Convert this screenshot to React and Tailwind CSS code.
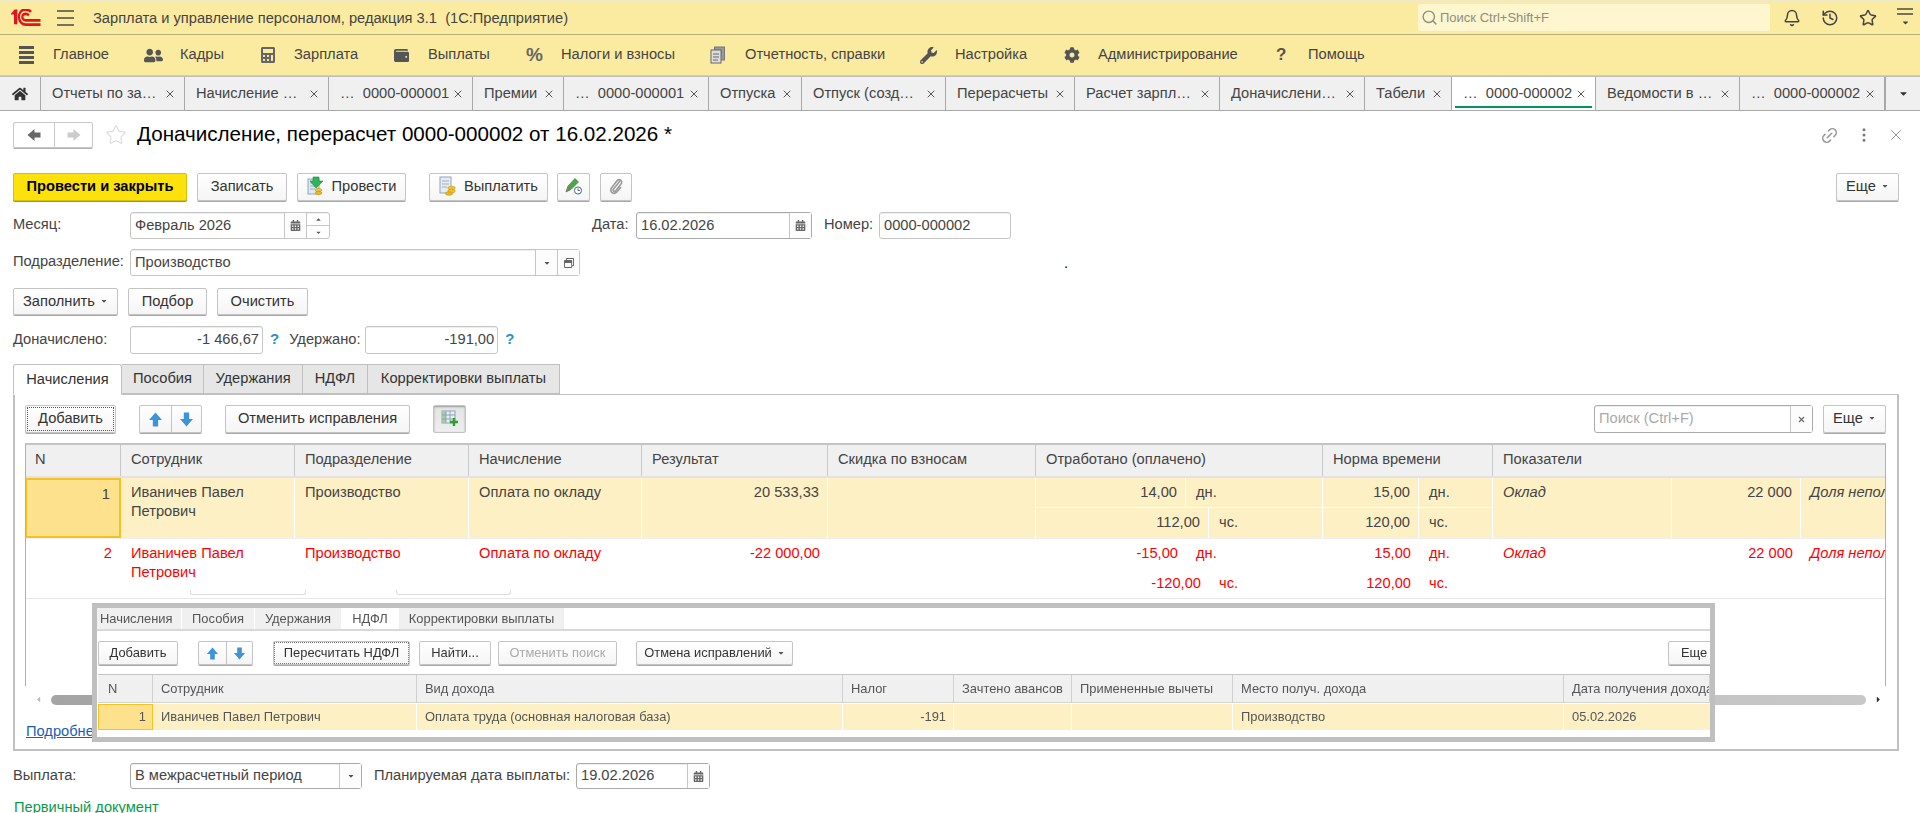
import React from "react";
import { Bell, History, Star, X, Link2, MoreVertical, Search } from "lucide-react";
import { FaHome, FaUserFriends, FaCalculator, FaWallet, FaWrench, FaCog, FaCalendarAlt, FaCaretDown, FaCaretUp, FaCaretLeft, FaCaretRight, FaRegWindowRestore } from "react-icons/fa";

const Logo = () => (
  <svg width="31" height="17" viewBox="0 1 31 14" preserveAspectRatio="none" className="shrink-0">
    <path d="M1 5 L4.5 1.5 H7.4 V13.5 H4 V5.5 H1 Z" fill="#e0141c" />
    <path d="M21 3.5 C20 2 18 1.5 15.5 1.5 C11.5 1.5 9 4 9 7.5 C9 11 11.5 13.8 15.5 13.8 H30.5 M19 6.2 C18 5.3 17 5 15.7 5 C13.7 5 12.3 6 12.3 7.5 C12.3 9 13.7 10.3 15.7 10.3 H30.5" fill="none" stroke="#e0141c" strokeWidth="2.2" />
  </svg>
);
const Burger = ({ thick = false }) => (
  <div className={thick ? "flex flex-col gap-[2px] w-[15px] shrink-0" : "flex flex-col gap-[5px] w-[17px] shrink-0"}>
    {(thick ? [0, 1, 2, 3] : [0, 1, 2]).map((i) => (
      <div key={i} className={thick ? "h-[3px] bg-[#555]" : "h-[2px] bg-[#77735a]"} />
    ))}
  </div>
);
const Arrow = ({ size = 15, color, rotate = "" }) => (
  <svg width={size} height={size} viewBox="0 0 14 14" className={rotate}>
    <path d="M7 .5 L13 7.5 H9.5 V13.5 H4.5 V7.5 H1 Z" fill={color} />
  </svg>
);
const ProvIcon = () => (
  <svg width="18" height="20" viewBox="0 0 18 20" className="shrink-0">
    <rect x="1" y="3" width="11" height="15" fill="#dfe8f2" stroke="#93a5b8" />
    <path d="M3 7h7M3 10h7M3 13h5" stroke="#9fb0c0" />
    <path d="M6 1h6V5h4l-7 7-6-7h3z" fill="#2fb457" stroke="#1d8a40" strokeWidth=".6" />
    <ellipse cx="11.5" cy="14" rx="3.5" ry="1.6" fill="#f1c232" stroke="#b98f12" strokeWidth=".5" />
    <ellipse cx="11.5" cy="17" rx="3.5" ry="1.6" fill="#e9b71f" stroke="#b98f12" strokeWidth=".5" />
  </svg>
);
const PayIcon = () => (
  <svg width="18" height="20" viewBox="0 0 18 20" className="shrink-0">
    <rect x="1" y="1" width="11" height="16" fill="#e6ecf3" stroke="#93a5b8" />
    <path d="M3 5h7M3 8h7M3 11h5" stroke="#9fb0c0" />
    <ellipse cx="12.5" cy="12" rx="3.8" ry="1.8" fill="#f1c232" stroke="#b98f12" strokeWidth=".5" />
    <ellipse cx="12.5" cy="15" rx="3.8" ry="1.8" fill="#f1c232" stroke="#b98f12" strokeWidth=".5" />
    <ellipse cx="10" cy="17.5" rx="3.8" ry="1.8" fill="#e9b71f" stroke="#b98f12" strokeWidth=".5" />
  </svg>
);
const PenIcon = () => (
  <svg width="18" height="18" viewBox="0 0 18 18">
    <path d="M1 15 L3 9 L10 1.5 L13.5 5 L6 12.5 Z" fill="#4ea64a" stroke="#35763a" strokeWidth=".6" />
    <path d="M1 15 L3 9 L6 12.5 Z" fill="#8a7a60" />
    <circle cx="13" cy="13.5" r="3.6" fill="#fff" stroke="#4a6b8a" />
    <path d="M13 11.5v2h1.8" stroke="#4a6b8a" fill="none" />
  </svg>
);
const ClipIcon = () => (
  <svg width="14" height="18" viewBox="0 0 14 18">
    <path d="M11 4 L4.5 12 C3.3 13.6 5.3 15.3 6.7 13.8 L12 7 C14 4.3 10.8 1 8.3 3.6 L2.6 10.8 C0 14.4 4.6 18.4 7.8 15 L12 10" fill="none" stroke="#9a9a9a" strokeWidth="1.6" />
  </svg>
);
const TableAddIcon = () => (
  <svg width="18" height="18" viewBox="0 0 18 18">
    <rect x="1" y="2" width="13" height="12" fill="#e8eef5" stroke="#8fa4b8" />
    <rect x="1" y="2" width="4" height="12" fill="#a9c8a4" />
    <path d="M5 2v12M9 2v12M1 6h13M1 10h13" stroke="#8fa4b8" />
    <path d="M13 9v8M9 13h8" stroke="#2ca02c" strokeWidth="2.4" />
  </svg>
);

const cellBtn = "flex items-center justify-center gap-[7px] border border-[#c4c4c4] rounded-[2px] bg-linear-to-b from-white to-[#f5f5f5] shadow-[0_1px_0_#a8a8a8] text-[#333] shrink-0";
const Btn = ({ w, h = "h-[28px]", children, extra = "" }) => <div className={`${cellBtn} ${w} ${h} ${h === "h-[24px]" ? "" : "pb-[2px]"} ${extra}`}>{children}</div>;
const Caret = () => <FaCaretDown className="text-[#555] ml-[-2px]" size={8} />;
const Cal = () => <FaCalendarAlt className="text-[#666]" size={11} />;
const fieldBase = "flex h-full border border-[#c6c6c6] rounded-[3px] bg-white shrink-0 text-[#444] shadow-[inset_0_1px_0_#eee]";
const fieldCls = `${fieldBase} items-stretch`;
const fieldText = "flex-1 pl-[4px] pb-[2px] flex items-center";
const Addon = ({ w = "w-[22px]", children }) => <div className={`${w} flex items-center justify-center border-l border-[#c6c6c6] bg-[#fcfcfc] shrink-0`}>{children}</div>;
const Label = ({ w, children, extra = "" }) => <div className={`text-[#444] shrink-0 flex items-center pb-[3px] ${w} ${extra}`}>{children}</div>;
const Q = ({ extra = "" }) => <div className={`font-bold text-[15px] text-[#2f8fcf] pb-[2px] shrink-0 ${extra}`}>?</div>;

const navItems = [
  { t: "Главное", icon: <Burger thick />, box: "w-[34px] pl-0", w: "w-[125px]" },
  { t: "Кадры", icon: <FaUserFriends size={19} color="#555" />, w: "w-[116px]", box: "w-[36px]" },
  { t: "Зарплата", icon: <FaCalculator size={16} color="#666" />, w: "w-[134px]", box: "w-[34px]" },
  { t: "Выплаты", icon: <FaWallet size={15} color="#555" />, w: "w-[132px]", box: "w-[34px]" },
  { t: "Налоги и взносы", icon: <span className="font-bold text-[#666] text-[19px]">%</span>, w: "w-[184px]", box: "w-[35px]" },
  { t: "Отчетность, справки", icon: <svg width="16" height="18" viewBox="0 0 16 18"><rect x="4.5" y="1" width="10" height="13" fill="#999" stroke="#777" /><rect x="1" y="4" width="10" height="13" fill="#ddd" stroke="#666" /><path d="M3 8h6M3 11h6M3 14h5" stroke="#666" /></svg>, w: "w-[210px]", box: "w-[35px]" },
  { t: "Настройка", icon: <FaWrench size={17} color="#555" />, w: "w-[144px]", box: "w-[35px]" },
  { t: "Администрирование", icon: <FaCog size={16} color="#555" />, w: "w-[210px]", box: "w-[34px]" },
  { t: "Помощь", icon: <span className="font-bold text-[#555] text-[17px]">?</span>, w: "w-[94px]", box: "w-[34px] pl-[2px]" },
];
const tabs = [
  ["Отчеты по за…", "w-[144px]"], ["Начисление …", "w-[144px]"], ["…  0000-000001", "w-[144px]"], ["Премии", "w-[91px]"],
  ["…  0000-000001", "w-[145px]"], ["Отпуска", "w-[93px]"], ["Отпуск (созд…", "w-[144px]"], ["Перерасчеты", "w-[129px]"],
  ["Расчет зарпл…", "w-[145px]"], ["Доначислени…", "w-[145px]"], ["Табели", "w-[87px]"], ["…  0000-000002", "w-[144px]", true],
  ["Ведомости в …", "w-[144px]"], ["…  0000-000002", "w-[145px]"],
];

const headCols = [
  ["N", "w-[96px]"], ["Сотрудник", "w-[174px]"], ["Подразделение", "w-[174px]"], ["Начисление", "w-[173px]"],
  ["Результат", "w-[186px]"], ["Скидка по взносам", "w-[208px]"], ["Отработано (оплачено)", "w-[287px]"],
  ["Норма времени", "w-[170px]"], ["Показатели", "flex-1"],
];
const Cell = ({ w, sep, children, extra = "" }) => <div className={`${w} shrink-0 h-full px-[10px] pt-[5px] ${sep ? "border-r border-white" : ""} ${extra}`}>{children}</div>;
const SubRow = ({ n, u, numW, sep, top }) => (
  <div className={`flex h-[30px] items-center ${top && sep ? "border-b border-white" : ""}`}>
    <div className={`${numW} shrink-0 text-right pr-[8px] ${top && sep ? "pb-[1px]" : "pb-[2px]"} h-full flex items-center justify-end ${sep ? "border-r border-white" : ""}`}>{n}</div>
    <div className={`pl-[10px] ${top && sep ? "pb-[1px]" : "pb-[2px]"}`}>{u}</div>
  </div>
);
const Row = ({ color, sel, vals, sep }) => (
  <div className={`flex h-[60px] ${color} leading-[19px]`}>
    <div className={`w-[96px] shrink-0 text-right pr-[9px] pt-[5px] ${sel ? "bg-[#fde18c] border-2 border-[#f5c226] pr-[7px] pt-[3px]" : ""}`}>{vals.n}</div>
    <Cell w="w-[174px]" sep={sep}>Иваничев Павел<br />Петрович</Cell>
    <Cell w="w-[174px]" sep={sep}>Производство</Cell>
    <Cell w="w-[173px]" sep={sep}>Оплата по окладу</Cell>
    <Cell w="w-[186px]" sep={sep} extra="text-right pr-[8px]">{vals.r}</Cell>
    <Cell w="w-[208px]" sep={sep} />
    <div className={`w-[287px] shrink-0 ${sep ? "border-r border-white" : ""}`}>
      <SubRow n={vals.a} u="дн." numW="w-[150px]" sep={sep} top />
      <SubRow n={vals.b} u="чс." numW="w-[173px]" sep={sep} />
    </div>
    <div className={`w-[170px] shrink-0 ${sep ? "border-r border-white" : ""}`}>
      <SubRow n={vals.c} u="дн." numW="w-[96px]" sep={sep} top />
      <SubRow n="120,00" u="чс." numW="w-[96px]" sep={sep} />
    </div>
    <Cell w="w-[179px]" sep={sep} extra="italic">Оклад</Cell>
    <Cell w="w-[129px]" sep={sep} extra="text-right pr-[8px]">22 000</Cell>
    <div className="flex-1 overflow-hidden whitespace-nowrap italic pl-[9px] pt-[5px]">Доля неполного</div>
  </div>
);

const miniTabs = [
  ["Начисления", "w-[84px] bg-[#f0f0f0] mr-[1px] justify-start pl-[3px]"], ["Пособия", "w-[72px] bg-[#f0f0f0] mr-[1px] justify-center"], ["Удержания", "w-[86px] bg-[#f0f0f0] justify-center"],
  ["НДФЛ", "w-[58px] bg-white justify-center"], ["Корректировки выплаты", "w-[165px] bg-[#f0f0f0] justify-center"],
];
const miniCols = [
  ["N", "w-[55px] pl-[10px]"], ["Сотрудник", "w-[264px] pl-[8px]"], ["Вид дохода", "w-[426px] pl-[8px]"], ["Налог", "w-[111px] pl-[8px]"], ["Зачтено авансов", "w-[118px] pl-[8px] whitespace-nowrap"],
  ["Примененные вычеты", "w-[161px] pl-[8px] whitespace-nowrap"], ["Место получ. дохода", "w-[331px] pl-[8px]"], ["Дата получения дохода", "flex-1 pl-[8px] whitespace-nowrap overflow-hidden"],
];

export default function App() {
  return (
    <div className="relative w-[1920px] h-[813px] overflow-hidden bg-white flex flex-col text-[14.67px] font-['Liberation_Sans',Arial,sans-serif] text-[#333]">
      {/* top bar */}
      <div className="h-[35px] shrink-0 flex items-center bg-[#fbeba0] border-t border-[#eee9c8] border-b border-b-[#b5ad7a] pl-[10px]">
        <Logo />
        <div className="ml-[16px]"><Burger /></div>
        <div className="ml-[19px] text-[#444] whitespace-pre">Зарплата и управление персоналом, редакция 3.1  (1С:Предприятие)</div>
        <div className="ml-auto flex items-center h-[27px] w-[352px] bg-[#fdf6cf] rounded-[2px] pl-[3px] gap-[2px] text-[13px] text-[#8e8e82]">
          <Search size={17} color="#8e8e82" />
          <span>Поиск Ctrl+Shift+F</span>
        </div>
        <div className="flex items-center w-[150px] shrink-0 pl-[13px] gap-[20px] text-[#444]">
          <Bell size={18} />
          <History size={18} />
          <Star size={18} />
          <div className="flex flex-col items-center gap-[3px] w-[16px]">
            <div className="h-[2px] w-[16px] bg-[#77735a]" />
            <div className="h-[2px] w-[16px] bg-[#77735a]" />
            <FaCaretDown size={9} color="#444" />
          </div>
        </div>
      </div>
      {/* sections */}
      <div className="h-[41px] shrink-0 flex items-center bg-[#fbeba0] border-b border-[#d8d08e] pl-[19px] text-[#444]">
        {navItems.map((n) => (
          <div key={n.t} className={`flex items-center shrink-0 ${n.w}`}>
            <div className={`${n.box} shrink-0 flex items-center`}>{n.icon}</div>
            <span className="pb-[2px]">{n.t}</span>
          </div>
        ))}
      </div>
      {/* window tabs */}
      <div className="h-[35px] shrink-0 flex items-stretch bg-[#f0f0f0] border-y border-[#a8a8a8] border-t-[#c0c0c0] text-[#444]">
        <div className="w-[41px] shrink-0 flex items-center justify-center border-r border-[#a8a8a8]"><FaHome size={16} color="#333" /></div>
        {tabs.map(([t, w, active], i) => (
          <div key={i} className={`${w} shrink-0 relative flex items-center justify-between pl-[11px] pr-[8px] whitespace-pre border-r border-[#a8a8a8] ${active ? "bg-white" : ""}`}>
            <span className="pb-[2px]">{t}</span>
            <X size={12} color="#555" />
            {active && <div className="absolute left-[3px] right-[3px] bottom-[2px] h-[2px] bg-[#00985a]" />}
          </div>
        ))}
        <div className="flex-1 flex items-center justify-center border-l border-[#a8a8a8]"><FaCaretDown size={11} color="#333" /></div>
      </div>
      {/* title */}
      <div className="h-[26px] mt-[11px] ml-[13px] shrink-0 flex items-center pr-[15px]">
        <div className="flex w-[80px] h-[26px] border border-[#c8c8c8] rounded-[2px] shadow-[0_1px_0_#b0b0b0]">
          <div className="w-[41px] flex items-center justify-center border-r border-[#c8c8c8]"><Arrow size={14} color="#666" rotate="-rotate-90" /></div>
          <div className="flex-1 flex items-center justify-center"><Arrow size={14} color="#ccc" rotate="rotate-90" /></div>
        </div>
        <Star size={22} color="#dcdcdc" className="ml-[12px]" strokeWidth={1.3} />
        <div className="ml-[10px] pb-[2px] text-[20.6px] text-black">Доначисление, перерасчет 0000-000002 от 16.02.2026 *</div>
        <Link2 size={19} color="#9a9a9a" className="ml-auto -rotate-45" />
        <MoreVertical size={18} color="#777" className="ml-[16px]" />
        <X size={18} color="#888" strokeWidth={1.2} className="ml-[14px]" />
      </div>
      {/* commands */}
      <div className="h-[28px] mt-[25px] ml-[13px] mr-[21px] shrink-0 flex items-stretch">
        <Btn w="w-[174px]" extra="!bg-none !bg-[#fde10a] font-bold text-black border-[#d8bf10] shadow-[0_1px_0_#a89412]">Провести и закрыть</Btn>
        <Btn w="w-[90px] ml-[10px]">Записать</Btn>
        <Btn w="w-[109px] ml-[10px]"><ProvIcon />Провести</Btn>
        <Btn w="w-[119px] ml-[23px]"><PayIcon />Выплатить</Btn>
        <Btn w="w-[33px] ml-[9px]"><PenIcon /></Btn>
        <Btn w="w-[32px] ml-[10px]"><ClipIcon /></Btn>
        <Btn w="w-[63px] ml-auto">Еще <Caret /></Btn>
      </div>
      {/* month */}
      <div className="h-[27px] mt-[11px] ml-[13px] shrink-0 flex items-center">
        <Label w="w-[117px]">Месяц:</Label>
        <div className={`${fieldCls} w-[200px]`}>
          <div className={fieldText}>Февраль 2026</div>
          <Addon><Cal /></Addon>
          <div className="w-[23px] flex flex-col border-l border-[#c6c6c6]">
            <div className="flex-1 flex items-center justify-center border-b border-[#c6c6c6]"><FaCaretUp size={7} color="#555" /></div>
            <div className="flex-1 flex items-center justify-center"><FaCaretDown size={7} color="#555" /></div>
          </div>
        </div>
        <Label w="w-[44px] ml-[262px]">Дата:</Label>
        <div className={`${fieldCls} w-[176px] !border-[#aaa]`}>
          <div className={fieldText}>16.02.2026</div>
          <Addon><Cal /></Addon>
        </div>
        <Label w="w-[55px] ml-[12px]">Номер:</Label>
        <div className={`${fieldBase} items-center w-[132px] pl-[4px] pb-[2px]`}>0000-000002</div>
      </div>
      {/* division */}
      <div className="h-[27px] mt-[10px] ml-[13px] shrink-0 flex items-center">
        <Label w="w-[117px]">Подразделение:</Label>
        <div className={`${fieldCls} w-[450px]`}>
          <div className={fieldText}>Производство</div>
          <Addon><FaCaretDown size={8} color="#555" /></Addon>
          <Addon><FaRegWindowRestore size={10} color="#666" /></Addon>
        </div>
        <div className="ml-[484px] text-black">.</div>
      </div>
      {/* fill */}
      <div className="h-[27px] mt-[12px] ml-[13px] shrink-0 flex">
        <Btn w="w-[105px]" h="h-[27px]">Заполнить <Caret /></Btn>
        <Btn w="w-[79px] ml-[10px]" h="h-[27px]">Подбор</Btn>
        <Btn w="w-[91px] ml-[10px]" h="h-[27px]">Очистить</Btn>
      </div>
      {/* totals */}
      <div className="h-[28px] mt-[11px] ml-[13px] shrink-0 flex items-center">
        <Label w="w-[117px]">Доначислено:</Label>
        <div className={`${fieldBase} w-[133px] justify-end items-center pr-[3px] pb-[2px]`}>-1 466,67</div>
        <Q extra="ml-[7px]" />
        <Label w="w-[76px]" extra="ml-[10px]">Удержано:</Label>
        <div className={`${fieldBase} w-[133px] justify-end items-center pr-[3px] pb-[2px]`}>-191,00</div>
        <Q extra="ml-[7px]" />
      </div>
      {/* tabs */}
      <div className="h-[31px] mt-[10px] ml-[13px] shrink-0 flex items-stretch relative z-10 -mb-[1px]">
        <div className="w-[109px] flex items-center justify-center pb-[2px] bg-white border border-[#c0c0c0] border-b-white rounded-t-[3px]">Начисления</div>
        {[["Пособия", "w-[82px]"], ["Удержания", "w-[99px]"], ["НДФЛ", "w-[65px]"], ["Корректировки выплаты", "w-[192px]"]].map(([t, w]) => (
          <div key={t} className={`${w} flex items-center justify-center pb-[2px] bg-[#e6e6e6] border border-l-0 border-[#c0c0c0] h-[30px]`}>{t}</div>
        ))}
      </div>
      {/* tab panel */}
      <div className="h-[357px] ml-[13px] w-[1886px] shrink-0 border-2 border-[#c0c0c0] border-t-[1px] pt-[10px] pl-[10px] pr-[11px] flex flex-col">
        <div className="h-[28px] shrink-0 flex items-stretch">
          <Btn w="w-[91px]" extra="outline-1 outline-dotted outline-[#555] -outline-offset-3">Добавить</Btn>
          <div className={`${cellBtn} w-[63px] ml-[23px] !gap-0`}>
            <div className="w-[32px] h-full flex items-center justify-center border-r border-[#c4c4c4]"><Arrow size={15} color="#3d94d6" /></div>
            <div className="flex-1 flex items-center justify-center"><Arrow size={15} color="#3d94d6" rotate="rotate-180" /></div>
          </div>
          <Btn w="w-[185px] ml-[23px]">Отменить исправления</Btn>
          <Btn w="w-[33px] ml-[23px]" extra="!from-[#e4e4e4] !to-[#eee] shadow-[inset_0_1px_2px_#999]"><TableAddIcon /></Btn>
          <div className={`${fieldCls} w-[219px] ml-auto !border-[#aaa]`}>
            <div className={`${fieldText} text-[#aaa]`}>Поиск (Ctrl+F)</div>
            <Addon><X size={9} color="#666" strokeWidth={3} /></Addon>
          </div>
          <Btn w="w-[63px] ml-[10px]">Еще <Caret /></Btn>
        </div>
        <div className="h-[243px] mt-[10px] shrink-0 overflow-hidden border-x border-[#b0b0b0] border-t-2 border-t-[#c4c4c4]">
          <div className="w-[1861px] -ml-[1px]">
            <div className="h-[33px] flex bg-[#f0f0f0] border-b-2 border-[#e2e2e2]">
              {headCols.map(([t, w]) => (
                <div key={t} className={`${w} ${t === "Показатели" ? "" : "shrink-0 border-r border-[#c8c8c8]"} flex items-center pl-[10px] pb-[4px] text-[#444]`}>{t}</div>
              ))}
            </div>
            <Row color="bg-[#fdf0c4] text-[#444]" sel sep vals={{ n: "1", r: "20 533,33", a: "14,00", b: "112,00", c: "15,00" }} />
            <div className="h-[1px] bg-[#f0f0f0]" />
            <Row color="text-[#ff0000] border-b border-[#e8e8e8]" vals={{ n: "2", r: "-22 000,00", a: "-15,00", b: "-120,00", c: "15,00" }} />
          </div>
        </div>
        <div className="h-[11px] mt-[8px] shrink-0 flex items-center">
          <FaCaretLeft size={9} color="#bbb" className="ml-[9px] shrink-0" />
          <div className="h-[10px] w-[1815px] shrink-0 ml-[8px] rounded-full bg-linear-to-r from-[#a4a4a4] to-[#c8c8c8]" />
          <FaCaretRight size={9} color="#333" className="ml-[8px] shrink-0" />
        </div>
        <div className="mt-[17px] ml-[1px] text-[#1a5fb4] underline leading-[18px]">Подробнее</div>
      </div>
      {/* payout */}
      <div className="h-[26px] mt-[12px] ml-[13px] shrink-0 flex items-center">
        <Label w="w-[117px]">Выплата:</Label>
        <div className={`${fieldCls} w-[232px] !border-[#aaa]`}>
          <div className={fieldText}>В межрасчетный период</div>
          <Addon><FaCaretDown size={8} color="#555" /></Addon>
        </div>
        <Label w="w-[202px] ml-[12px] whitespace-nowrap">Планируемая дата выплаты:</Label>
        <div className={`${fieldCls} w-[134px] !border-[#aaa]`}>
          <div className={fieldText}>19.02.2026</div>
          <Addon><Cal /></Addon>
        </div>
      </div>
      <div className="mt-[9px] ml-[14px] shrink-0 text-[#0a9a4a] leading-[18px]">Первичный документ</div>

      {/* fragments of hidden inputs */}
      <div className="absolute left-[190px] top-[590px] w-[116px] h-[5px] border border-t-0 border-[#dcdcdc] rounded-b-[3px]" />
      <div className="absolute left-[396px] top-[590px] w-[115px] h-[5px] border border-t-0 border-[#dcdcdc] rounded-b-[3px]" />

      {/* pasted fragment */}
      <div className="absolute left-[92px] top-[603px] w-[1623px] h-[139px] border-[5px] border-[#bfbfbf] bg-white overflow-hidden text-[12.9px] text-[#555] flex flex-col">
        <div className="h-[23px] shrink-0 flex items-stretch border-b-2 border-[#d8d8d8] blur-[0.3px]">
          {miniTabs.map(([t, w]) => (
            <div key={t} className={`${w} shrink-0 flex items-center`}>{t}</div>
          ))}
        </div>
        <div className="h-[24px] mt-[10px] pl-[1px] shrink-0 flex items-stretch blur-[0.3px]">
          <Btn w="w-[80px]" h="h-[24px]">Добавить</Btn>
          <div className={`${cellBtn} w-[55px] h-[24px] ml-[20px] !gap-0`}>
            <div className="w-[28px] h-full flex items-center justify-center border-r border-[#c4c4c4]"><Arrow size={13} color="#3d94d6" /></div>
            <div className="flex-1 flex items-center justify-center"><Arrow size={13} color="#3d94d6" rotate="rotate-180" /></div>
          </div>
          <Btn w="w-[137px] ml-[20px]" h="h-[24px]" extra="outline-1 outline-dotted outline-[#777] -outline-offset-2">Пересчитать НДФЛ</Btn>
          <Btn w="w-[72px] ml-[9px]" h="h-[24px]">Найти...</Btn>
          <Btn w="w-[119px] ml-[7px]" h="h-[24px]" extra="!text-[#aaa]">Отменить поиск</Btn>
          <Btn w="w-[157px] ml-[19px]" h="h-[24px]">Отмена исправлений <Caret /></Btn>
          <Btn w="w-[50px] ml-[875px] !justify-start pl-[12px]" h="h-[24px]">Еще</Btn>
        </div>
        <div className="h-[29px] mt-[9px] ml-[1px] shrink-0 flex bg-[#f0f0f0] border-y border-[#d4d4d4] border-t-[#c4c4c4] blur-[0.3px]">
          {miniCols.map(([t, w]) => (
            <div key={t} className={`${w} shrink-0 border-r border-[#d0d0d0] flex items-center`}>{t}</div>
          ))}
        </div>
        <div className="h-[26px] mt-[1px] ml-[1px] shrink-0 flex bg-[#fdf0c4] blur-[0.3px]">
          <div className="w-[55px] shrink-0 bg-[#fde18c] border border-[#f5c226] flex items-center justify-end pr-[6px]">1</div>
          <div className="w-[264px] shrink-0 border-r border-white flex items-center pl-[8px]">Иваничев Павел Петрович</div>
          <div className="w-[426px] shrink-0 border-r border-white flex items-center pl-[8px]">Оплата труда (основная налоговая база)</div>
          <div className="w-[111px] shrink-0 border-r border-white flex items-center justify-end pr-[7px]">-191</div>
          <div className="w-[118px] shrink-0 border-r border-white" />
          <div className="w-[161px] shrink-0 border-r border-white" />
          <div className="w-[331px] shrink-0 border-r border-white flex items-center pl-[8px]">Производство</div>
          <div className="flex-1 flex items-center pl-[8px]">05.02.2026</div>
        </div>
      </div>
    </div>
  );
}
